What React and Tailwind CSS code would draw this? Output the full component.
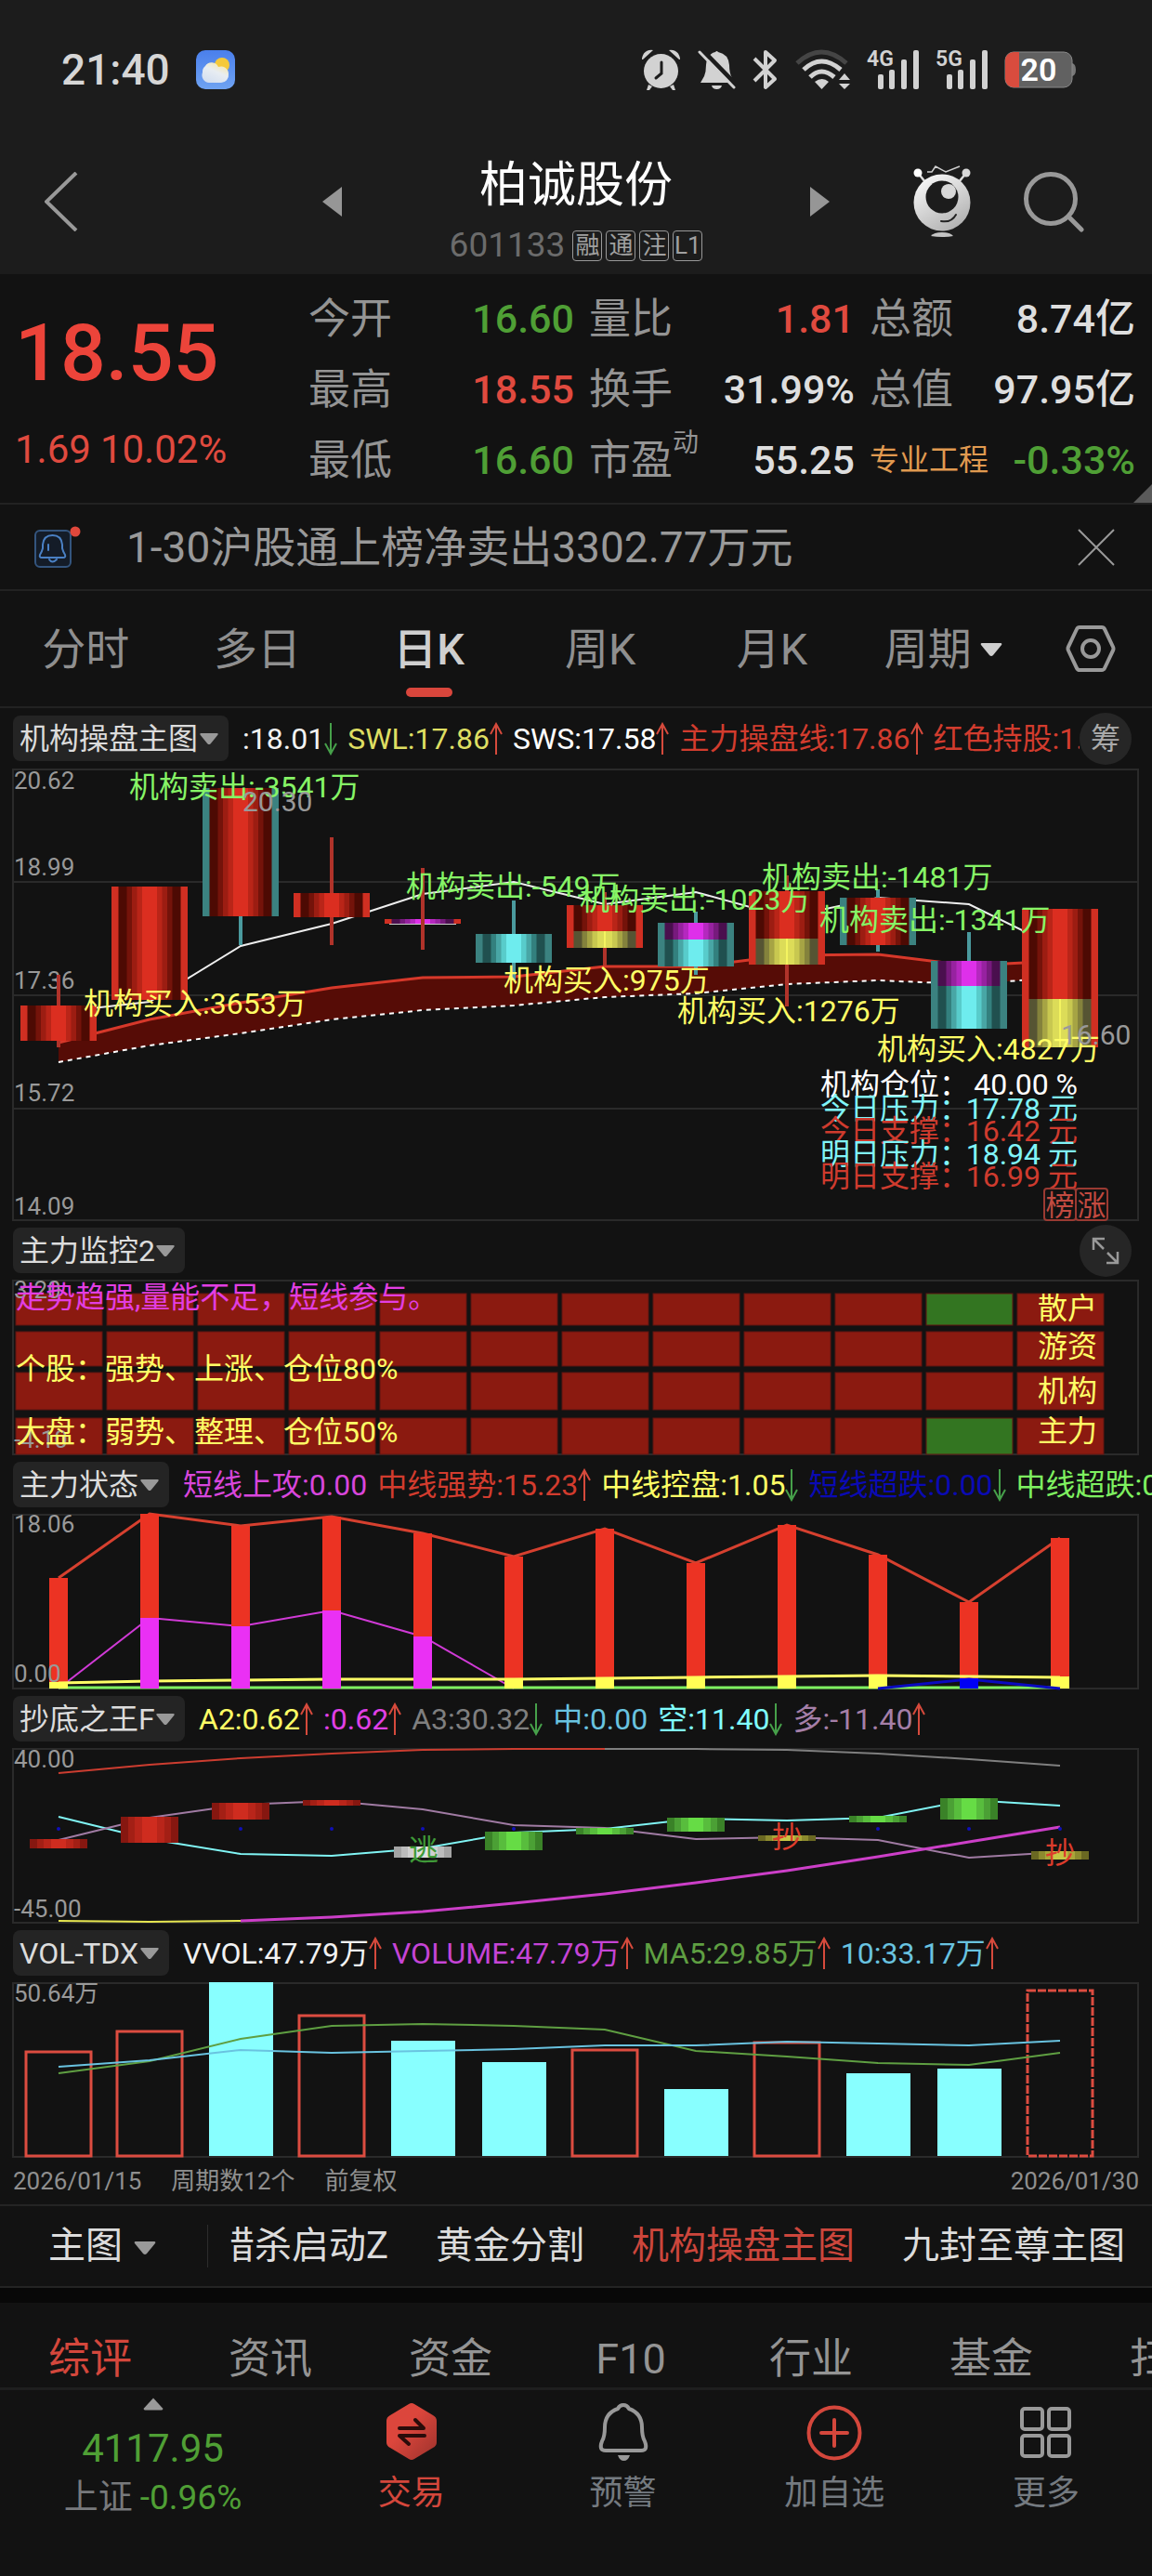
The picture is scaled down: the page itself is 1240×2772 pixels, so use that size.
import { clsx } from "clsx";

const quoteColumns = [
  [
    { label: "今开", value: "16.60", tone: "text-[#4f9f35]" },
    { label: "最高", value: "18.55", tone: "text-[#e04a3f]" },
    { label: "最低", value: "16.60", tone: "text-[#4f9f35]" },
  ],
  [
    { label: "量比", value: "1.81", tone: "text-[#e04a3f]" },
    { label: "换手", value: "31.99%", tone: "text-[#dedede]" },
    { label: "市盈", sup: "动", value: "55.25", tone: "text-[#dedede]" },
  ],
  [
    { label: "总额", value: "8.74亿", tone: "text-[#dedede]" },
    { label: "总值", value: "97.95亿", tone: "text-[#dedede]" },
    { label: "专业工程", sector: true, value: "-0.33%", tone: "text-[#4f9f35]" },
  ],
];

const periodTabs = ["分时", "多日", "日K", "周K", "月K"];
const infoTabs = ["综评", "资讯", "资金", "F10", "行业", "基金", "扫雷"];
const mainIndicators = ["猎杀启动Z", "黄金分割", "机构操盘主图", "九封至尊主图"];

const mainValues = [
  { text: ":18.01", tone: "text-[#f2f2f2]", dir: "down" },
  { text: "SWL:17.86", tone: "text-[#dede62]", dir: "up" },
  { text: "SWS:17.58", tone: "text-white", dir: "up" },
  { text: "主力操盘线:17.86", tone: "text-[#d23c2e]", dir: "up" },
  { text: "红色持股:1.00", tone: "text-[#d23c2e]" },
];

const stateValues = [
  { text: "短线上攻:0.00", tone: "text-[#d846dc]" },
  { text: "中线强势:15.23", tone: "text-[#d23c2e]", dir: "up" },
  { text: "中线控盘:1.05", tone: "text-[#ffff66]", dir: "down" },
  { text: "短线超跌:0.00", tone: "text-[#0a0ab4]", dir: "down" },
  { text: "中线超跌:0.00", tone: "text-[#7ef060]" },
];

const bottomValues = [
  { text: "A2:0.62", tone: "text-[#ffff66]", dir: "up" },
  { text: ":0.62", tone: "text-[#e040e6]", dir: "up" },
  { text: "A3:30.32", tone: "text-[#7f7f7f]", dir: "down" },
  { text: "中:0.00", tone: "text-[#69c3e0]" },
  { text: "空:11.40", tone: "text-[#80ffff]", dir: "down" },
  { text: "多:-11.40", tone: "text-[#a57fa8]", dir: "up" },
];

const volumeValues = [
  { text: "VVOL:47.79万", tone: "text-[#f2f2f2]", dir: "up" },
  { text: "VOLUME:47.79万", tone: "text-[#c544d6]", dir: "up" },
  { text: "MA5:29.85万", tone: "text-[#5f9f42]", dir: "up" },
  { text: "10:33.17万", tone: "text-[#69c3e0]", dir: "up" },
];

// column centre and polyline helpers shared by all the charts
const cx = (i) => 50 + 98 * i;
const line = (ys, from = 0) => ys.map((y, i) => `${cx(i + from)},${y}`).join(" ");

const shades = {
  red: ["#4d0a03", "#74130a", "#9c1d12", "#b92518", "#db2e20"],
  cyan: ["#20504f", "#33807e", "#48a6a5", "#58cccb", "#6eecee"],
  yellow: ["#565433", "#84823c", "#a6a444", "#c8c850", "#dcdc58"],
  magenta: ["#4a0f4e", "#771a7d", "#9722a0", "#b528bf", "#de30ea"],
};
const shadeWidths = [67, 49, 38, 27, 16];

const candles = [
  { shell: "red", top: 255, bottom: 293, high: 222, low: 300, body: "red" },
  { shell: "red", top: 127, bottom: 249, high: 127, low: 249, body: "red" },
  { shell: "teal", top: 21, bottom: 159, high: 21, low: 190, body: "red" },
  { shell: "red", top: 134, bottom: 160, high: 74, low: 190, body: "red" },
  { shell: "red", top: 162, bottom: 167, high: 107, low: 195, body: "magenta", front: true },
  { shell: "teal", top: 178, bottom: 209, high: 142, low: 228, body: "cyan" },
  { shell: "red", top: 147, bottom: 193, high: 133, low: 212, body: "red", split: 175, lower: "yellow" },
  { shell: "teal", top: 166, bottom: 213, high: 154, low: 222, body: "magenta", split: 184, lower: "cyan" },
  { shell: "red", top: 132, bottom: 211, high: 115, low: 256, body: "red", split: 183, lower: "yellow" },
  { shell: "teal", top: 139, bottom: 190, high: 130, low: 197, body: "red" },
  { shell: "teal", top: 207, bottom: 280, high: 176, low: 280, body: "magenta", split: 234, lower: "cyan" },
  { shell: "red", top: 151, bottom: 300, high: 151, low: 300, body: "red", split: 248, lower: "yellow" },
];

const whiteLine = [262, 251, 191, 167, 135, 122, 146, 133, 160, 139, 146, 194];
const redLine = [295, 270, 252, 236, 225, 224, 213, 213, 201, 200, 212, 207];
const dashLine = [316, 298, 285, 270, 260, 255, 246, 242, 232, 228, 232, 225];

const tradeLabels = [
  { x: 126, y: 31, text: "机构卖出:-3541万", fill: "#86f566" },
  { x: 77, y: 264, text: "机构买入:3653万", fill: "#ffff66" },
  { x: 424, y: 138, text: "机构卖出:-549万", fill: "#86f566" },
  { x: 529, y: 239, text: "机构买入:975万", fill: "#ffff66" },
  { x: 611, y: 152, text: "机构卖出:-1023万", fill: "#86f566" },
  { x: 807, y: 128, text: "机构卖出:-1481万", fill: "#86f566" },
  { x: 869, y: 174, text: "机构卖出:-1341万", fill: "#86f566" },
  { x: 716, y: 272, text: "机构买入:1276万", fill: "#ffff66" },
  { x: 931, y: 313, text: "机构买入:4827万", fill: "#ffff66" },
];

const levels = [
  { y: 351, label: "机构仓位：", value: "40.00 %", fill: "#ffffff" },
  { y: 377, label: "今日压力：", value: "17.78 元", fill: "#80f4f8" },
  { y: 401, label: "今日支撑：", value: "16.42 元", fill: "#cf3b2e" },
  { y: 426, label: "明日压力：", value: "18.94 元", fill: "#80f4f8" },
  { y: 450, label: "明日支撑：", value: "16.99 元", fill: "#cf3b2e" },
];

const Triangle = ({ className = "", up = false }) => (
  <svg viewBox="0 0 24 14" className={clsx("shrink-0 fill-current", className)} aria-hidden="true">
    <path d={up ? "M12 0 23 12Q24 14 22 14H2Q0 14 1 12Z" : "M2 0H22Q24 0 23 2L14 13Q12 15 10 13L1 2Q0 0 2 0Z"} />
  </svg>
);

const Arrow = ({ dir }) => (
  <svg viewBox="0 0 14 36" className={clsx("h-9 w-3.5 shrink-0", dir === "up" ? "text-[#d64a3c]" : "text-[#46a04a]")} fill="none" stroke="currentColor" strokeWidth="2" aria-hidden="true">
    {dir === "up" ? <path d="M7 35V2M1 13 7 2l6 11" /> : <path d="M7 1v33M1 23l6 11 6-11" />}
  </svg>
);

const StatusBar = () => (
  <div className="flex h-[150px] items-center justify-between pr-[82px] pl-[66px]">
    <div className="flex items-center gap-7">
      <span className="text-[46px] leading-none font-medium text-[#d6d6d6]">21:40</span>
      <svg viewBox="0 0 42 42" className="size-[42px]" aria-hidden="true">
        <defs>
          <linearGradient id="sky" x1="0" y1="0" x2="0" y2="1">
            <stop offset="0" stopColor="#4a7fec" />
            <stop offset="1" stopColor="#6fa3f2" />
          </linearGradient>
          <linearGradient id="cloud" x1="0.8" y1="0" x2="0.2" y2="1">
            <stop offset="0" stopColor="#f7e7a4" />
            <stop offset="0.45" stopColor="#e8edf2" />
            <stop offset="1" stopColor="#d2def0" />
          </linearGradient>
        </defs>
        <rect width="42" height="42" rx="10" fill="url(#sky)" />
        <circle cx="28" cy="16" r="8" fill="#f5c93a" />
        <path d="M14 35a8 8 0 0 1-7-11 8 8 0 0 1 3-7 8 8 0 0 1 14 1 8 8 0 0 1 11 8 8 8 0 0 1-8 9z" fill="url(#cloud)" />
      </svg>
    </div>
    <div className="flex items-center gap-[18px] text-[#d2d2d2]">
      <svg viewBox="0 0 43 44" className="h-11 w-[43px]" fill="currentColor" aria-label="闹钟">
        <circle cx="21.500" cy="23.500" r="18.500" />
        <path d="M1 11a10 10 0 0 1 12-10L2 11zM42 11A10 10 0 0 0 30 1l11 10zM8 38l4 2-3 4H6zM35 38l-4 2 3 4h3z" />
        <path d="M22 14v12l-6 5" fill="none" stroke="#1c1c1c" strokeWidth="3" strokeLinecap="round" />
      </svg>
      <svg viewBox="0 0 41 44" className="h-11 w-[41px]" aria-label="静音">
        <path d="M19 3q1.500-2 3 0 11 2 12 14 0 9 3 14l2 5H3l4-7q2-5 2-12 1-12 10-14zM15 39h11q-1 4-5.500 4T15 39z" fill="currentColor" />
        <path d="M4 0 43 40" stroke="#1c1c1c" strokeWidth="5" />
        <path d="M2 3 39 41" stroke="currentColor" strokeWidth="3" strokeLinecap="round" />
      </svg>
      <svg viewBox="0 0 28 44" className="h-11 w-7" fill="none" stroke="currentColor" strokeWidth="4" strokeLinejoin="round" aria-label="蓝牙">
        <path d="M2 10 24 32 14 41V3l10 9L2 34" />
      </svg>
      <svg viewBox="0 0 59 44" className="h-11 w-[59px]" fill="none" stroke="currentColor" strokeWidth="5" aria-label="无线网络">
        <path d="M2 15Q28-9 55 15" stroke="#454545" />
        <path d="M9 22q19-18 40 0M16 30q12-12 26 0" />
        <path d="m21 35q8-6 15 0l-7.500 8zM53 26l6 7H47zM47 37h12l-6 6z" fill="currentColor" stroke="none" />
      </svg>
      {["4G", "5G"].map((net) => (
        <svg key={net} viewBox="0 0 56 44" className="h-11 w-14" fill="currentColor" aria-label={net}>
          <text x="0" y="18" className="text-[23px] font-semibold">{net}</text>
          <rect x="12" y="27" width="6" height="16" rx="2" />
          <rect x="24" y="22" width="6" height="21" rx="2" />
          <rect x="37" y="11" width="6" height="32" rx="2" />
          <rect x="50" y="1" width="6" height="42" rx="2" />
        </svg>
      ))}
      <svg viewBox="0 0 77 40" className="h-10 w-[77px]" aria-label="电量 20%">
        <path d="M73 13q4 1 4 7t-4 7z" fill="#777" />
        <rect x="1" y="1" width="72" height="38" rx="9" fill="#616161" stroke="#8a8a8a" strokeWidth="1" />
        <path d="M16 1H10a9 9 0 0 0-9 9v20a9 9 0 0 0 9 9h6z" fill="#d94c3e" />
        <text x="37" y="32" textAnchor="middle" className="fill-white text-[34px] font-semibold">20</text>
      </svg>
    </div>
  </div>
);

const TitleBar = () => (
  <div className="grid h-[145px] grid-cols-[1fr_auto_1fr] items-center pb-3">
    <button type="button" className="w-fit pl-12 text-[#999]" aria-label="返回">
      <svg viewBox="0 0 36 64" className="h-16 w-9" fill="none" stroke="currentColor" strokeWidth="4">
        <path d="M34 1 2 32l32 31" />
      </svg>
    </button>
    <div className="flex items-center">
      <button type="button" className="text-[#969696]" aria-label="上一只">
        <svg viewBox="0 0 21 32" className="h-8 w-[21px] fill-current"><path d="M21 0v32L0 16z" /></svg>
      </button>
      <div className="flex w-[504px] flex-col items-center gap-3.5 pt-5">
        <h1 className="text-[52px] leading-[60px] text-white">柏诚股份</h1>
        <div className="flex items-center gap-1">
          <span className="mr-1 text-[37px] leading-10 text-[#6b6b6b]">601133</span>
          {["融", "通", "注", "L1"].map((tag) => (
            <span key={tag} className="grid h-[33px] w-8 place-items-center rounded-sm border border-[#999] text-[26px] leading-none text-[#a0a0a0]">{tag}</span>
          ))}
        </div>
      </div>
      <button type="button" className="text-[#969696]" aria-label="下一只">
        <svg viewBox="0 0 21 32" className="h-8 w-[21px] fill-current"><path d="M0 0v32l21-16z" /></svg>
      </button>
    </div>
    <div className="flex items-center justify-end gap-14 pr-[73px]">
      <button type="button" aria-label="智能助手">
        <svg viewBox="0 0 62 78" className="h-[78px] w-[62px]">
          <defs>
            <linearGradient id="robot" x1="0" y1="0" x2="0.6" y2="1">
              <stop offset="0" stopColor="#ffffff" />
              <stop offset="1" stopColor="#b4b4b4" />
            </linearGradient>
          </defs>
          <path d="M15 7h5l4-6 11 6 15-6" fill="none" stroke="#cfcfcf" strokeWidth="1.500" />
          <path d="M5 8l8 10M57 8l-8 10" stroke="#ddd" strokeWidth="2.500" />
          <circle cx="5" cy="8" r="4.500" fill="#fff" />
          <circle cx="57" cy="8" r="4.500" fill="#d8d8d8" />
          <circle cx="31" cy="40" r="30.500" fill="url(#robot)" />
          <circle cx="31" cy="34" r="17.500" fill="#1c1c1c" />
          <circle cx="38" cy="28" r="8" fill="#d8d8d8" />
          <path d="M30 60q11 2 16-7" fill="none" stroke="#222" strokeWidth="2" strokeLinecap="round" />
          <path d="M19 76q3-4 12-4t12 4q-12 2-24 0z" fill="#c4c4c4" />
        </svg>
      </button>
      <button type="button" aria-label="搜索">
        <svg viewBox="0 0 66 66" className="size-[66px]" fill="none" stroke="#999" strokeWidth="5" strokeLinecap="round">
          <circle cx="30" cy="30" r="26.500" />
          <path d="m49 49 14 14" />
        </svg>
      </button>
    </div>
  </div>
);

const Quote = () => (
  <section className="relative flex border-b-2 border-[#222] pt-2.5 pb-2">
    <div className="flex w-[332px] flex-col pl-4">
      <div className="flex h-[150px] items-center text-[86px] leading-none font-medium text-[#ec443a]">18.55</div>
      <div className="flex h-[58px] items-center gap-2.5 text-[42px] leading-none text-[#e04a3f]">
        <span>1.69</span>
        <span>10.02%</span>
      </div>
    </div>
    <div className="grid flex-1 grid-cols-3 gap-x-4 pr-[18px]">
      {quoteColumns.map((rows) => (
        <dl key={rows[0].label}>
          {rows.map((row) => (
            <div key={row.label} className="flex h-[76px] items-center justify-between whitespace-nowrap">
              <dt className={row.sector ? "text-[32px] text-[#e09a50]" : "flex text-[45px] leading-none text-[#949494]"}>
                {row.label}
                {row.sup && <span className="-mt-2.5 text-[28px] leading-none">{row.sup}</span>}
              </dt>
              <dd className={clsx("text-[43px] leading-none font-medium", row.tone)}>{row.value}</dd>
            </div>
          ))}
        </dl>
      ))}
    </div>
    <svg viewBox="0 0 20 20" className="absolute right-0 bottom-0 size-5" aria-hidden="true"><path d="M20 0v20H0z" fill="#5a5a5a" /></svg>
  </section>
);

const Notice = () => (
  <section className="flex h-[93px] items-center border-b-2 border-[#222] pr-10 pl-9">
    <svg viewBox="0 0 52 46" className="h-[46px] w-[52px]" fill="none" aria-hidden="true">
      <rect x="2" y="5" width="38" height="39" rx="5" stroke="#34557e" strokeWidth="2" fill="#141c28" />
      <path d="M9 34q-3 0-2-3 2-3 3-7v-4q1-10 10.500-10T31 20v4q1 4 3 7 1 3-2 3zM17 36q3 5 8 0M16 20v6" stroke="#4a80c4" strokeWidth="2" strokeLinecap="round" />
      <circle cx="45" cy="6" r="5.500" fill="#e0483c" />
    </svg>
    <p className="ml-12 flex-1 text-[46px] leading-none text-[#999]">1-30沪股通上榜净卖出3302.77万元</p>
    <button type="button" aria-label="关闭">
      <svg viewBox="0 0 40 40" className="size-10" stroke="#999" strokeWidth="2"><path d="M1 1 39 39M39 1 1 39" /></svg>
    </button>
  </section>
);

const PeriodTabs = () => (
  <nav className="flex h-[126px] border-b-2 border-[#222] text-[47px] text-[#8f8f8f]">
    {periodTabs.map((tab) => (
      <button key={tab} type="button" className={clsx("relative flex-1 pt-0.5", tab === "日K" && "font-medium text-[#cfcfcf]")}>
        {tab}
        {tab === "日K" && <span className="absolute bottom-2.5 left-1/2 h-2.5 w-[50px] -translate-x-1/2 rounded-full bg-[#d9463c]" />}
      </button>
    ))}
    <label className="flex flex-1 items-center justify-center gap-2 pt-0.5">
      <select aria-label="周期" className="appearance-none bg-transparent outline-none">
        <option>周期</option>
      </select>
      <Triangle className="h-3.5 w-[26px] text-[#cfcfcf]" />
    </label>
    <button type="button" className="grid w-[132px] place-items-center" aria-label="设置">
      <svg viewBox="0 0 54 50" className="h-[50px] w-[54px]" fill="none" stroke="#999" strokeWidth="4">
        <path d="M15 2h24q2 0 3 2l9 19q1 2 0 4l-9 19q-1 2-3 2H15q-2 0-3-2L3 27q-1-2 0-4l9-19q1-2 3-2z" />
        <circle cx="27" cy="25" r="9" />
      </svg>
    </button>
  </nav>
);

const PanelHeader = ({ name, values = [], action, tall = false }) => (
  <div className={clsx("flex items-center pl-3.5", tall ? "h-[65px]" : "h-[63px]")}>
    <label className="flex h-[49px] shrink-0 items-center rounded-lg bg-[#242424] pr-2.5 pl-[7px] text-[32px] text-[#dcdcdc]">
      <select aria-label={name} className="appearance-none bg-transparent outline-none">
        <option>{name}</option>
      </select>
      <Triangle className="h-3 w-[22px] text-[#999]" />
    </label>
    <div className="ml-[15px] flex min-w-0 flex-1 gap-[11px] overflow-hidden text-[32px] leading-9 whitespace-nowrap">
      {values.map((item) => (
        <span key={item.text} className={clsx("flex shrink-0 items-center", item.tone)}>
          {item.text}
          {item.dir && <Arrow dir={item.dir} />}
        </span>
      ))}
    </div>
    {action}
  </div>
);

const Chart = ({ height, label, children }) => (
  <div className="px-[13px]">
    <svg viewBox={`0 0 1214 ${height}`} className="block h-auto w-full overflow-visible" role="img" aria-label={label}>
      <rect x="1" y="1" width="1211" height={height - 2} fill="none" stroke="#2a2a2a" strokeWidth="2" />
      {children}
    </svg>
  </div>
);

const AxisText = ({ y, children }) => (
  <text x="2" y={y} className="fill-[#999] text-[26px]">{children}</text>
);

const ShadedBar = ({ x, top, bottom, colors, widths }) =>
  widths.map((w, i) => <rect key={w} x={x - w / 2} y={top} width={w} height={bottom - top} fill={colors[i]} />);

const Candle = ({ x, shell, top, bottom, high, low, body, split, lower, front }) => {
  const wick = <rect x={x - 2} y={high} width="4" height={low - high} fill={shell === "red" ? "#b0332a" : "#4a9a9e"} />;
  return (
    <g>
      {!front && wick}
      <rect x={x - 41} y={top} width="82" height={bottom - top} fill={shell === "red" ? "#d02f22" : "#3b8280"} />
      <ShadedBar x={x} top={top} bottom={split || bottom} colors={shades[body]} widths={shadeWidths} />
      {lower && <ShadedBar x={x} top={split} bottom={bottom} colors={shades[lower]} widths={shadeWidths} />}
      {lower === "yellow" && <rect x={x - 1} y={split} width="2" height={bottom - split} fill="#f4f460" />}
      {front && <rect x={x - 36} y={bottom} width="72" height="1" fill="#ccc" />}
      {front && wick}
    </g>
  );
};

const MainChart = () => (
  <Chart height={487} label="日K 主图">
    <path d="M1 122H1212M1 244H1212M1 366H1212" stroke="#2a2a2a" strokeWidth="2" />
    {["20.62", "18.99", "17.36", "15.72", "14.09"].map((text, i) => (
      <AxisText key={text} y={[22, 115, 237, 358, 480][i]}>{text}</AxisText>
    ))}
    <polygon points={`${line(redLine)} ${line(dashLine).split(" ").reverse().join(" ")}`} fill="#560c06" />
    <polyline points={line(redLine)} fill="none" stroke="#d6382a" strokeWidth="3" />
    <polyline points={line(dashLine)} fill="none" stroke="#fff" strokeWidth="2" strokeDasharray="5 5" />
    <polyline points={line(whiteLine)} fill="none" stroke="#eee" strokeWidth="2" />
    {candles.map((candle, i) => <Candle key={cx(i)} x={cx(i)} {...candle} />)}
    {tradeLabels.map((item) => (
      <text key={item.text} x={item.x} y={item.y} fill={item.fill} className="text-[32px]">{item.text}</text>
    ))}
    <text x="248" y="46" className="fill-[#999] text-[30px]">20.30</text>
    <text x="1129" y="297" className="fill-[#999] text-[30px]">16.60</text>
    {levels.map((item) => (
      <g key={item.label} fill={item.fill} className="text-[32px]">
        <text x="870" y={item.y}>{item.label}</text>
        <text x="1147" y={item.y} textAnchor="end">{item.value}</text>
      </g>
    ))}
    {["榜", "涨"].map((text, i) => (
      <g key={text}>
        <rect x={1111 + i * 34} y="452" width="34" height="34" rx="3" fill="none" stroke="#9a3a32" strokeWidth="2" />
        <text x={1128 + i * 34} y="481" textAnchor="middle" className="fill-[#c24a40] text-[31px]">{text}</text>
      </g>
    ))}
  </Chart>
);

const monitorRows = [
  { y: 15, h: 34, label: "散户", base: 42, green: true },
  { y: 56, h: 37, label: "游资", base: 83 },
  { y: 100, h: 40, label: "机构", base: 131 },
  { y: 149, h: 39, label: "主力", base: 174, green: true },
];

const MonitorChart = () => (
  <Chart height={189} label="主力监控2">
    {monitorRows.map((row) =>
      candles.map((_, i) => (
        <rect key={`${row.label}${cx(i)}`} x={cx(i) - 46} y={row.y} width="93" height={row.h} stroke="#5f1510" strokeWidth="1" fill={row.green && i === 10 ? "#337521" : "#8b1a10"} />
      ))
    )}
    <AxisText y={20}>3.20</AxisText>
    <AxisText y={181}>-4.10</AxisText>
    <g className="fill-[#ffff66] text-[32px]">
      <text x="4" y="30" className="fill-[#e23ee2]">走势趋强,量能不足，短线参与。</text>
      <text x="4" y="107">个股：强势、上涨、仓位80%</text>
      <text x="4" y="175">大盘：弱势、整理、仓位50%</text>
      {monitorRows.map((row) => <text key={row.label} x="1104" y={row.base}>{row.label}</text>)}
    </g>
  </Chart>
);

const strength = [69, 0, 13, 3, 21, 46, 16, 53, 12, 44, 95, 26];
const attack = [188, 112, 121, 104, 132, 188];
const control = [182, 180, 179, 178, 178, 178, 177, 176, 175, 174, 175, 176];

const StateChart = () => (
  <Chart height={189} label="主力状态">
    <polyline points={line(strength)} fill="none" stroke="#d6402f" strokeWidth="3" />
    <polyline points={line(attack)} fill="none" stroke="#d03ad6" strokeWidth="2" />
    {strength.map((y, i) => <rect key={cx(i)} x={cx(i) - 10} y={y} width="20" height={188 - y} fill="#ec3323" />)}
    <path d="M50 187H1128" stroke="#7ef060" strokeWidth="3" />
    <polyline points={line(control)} fill="none" stroke="#ffff66" strokeWidth="3" />
    {[1, 2, 3, 4].map((i) => <rect key={i} x={cx(i) - 10} y={attack[i]} width="20" height={188 - attack[i]} fill="#ea30f4" />)}
    {[0, 5, 6, 7, 8, 9, 11].map((i) => <rect key={i} x={cx(i) - 10} y={control[i] - 1} width="20" height={189 - control[i]} fill="#ffff55" />)}
    <polyline points={line([188, 178, 188], 9)} fill="none" stroke="#0a0ac0" strokeWidth="3" />
    <rect x={cx(10) - 10} y="177" width="20" height="11" fill="#0000f4" />
    <AxisText y={20}>18.06</AxisText>
    <AxisText y={181}>0.00</AxisText>
  </Chart>
);

const barShades = {
  red: ["#861710", "#a31f15", "#b9251a", "#cf2c1f"],
  green: ["#3a8228", "#4ba035", "#58bd3d", "#66dc45"],
  gray: ["#a4a4a4", "#bcbcbc", "#d0d0d0", "#e0e0e0"],
  olive: ["#6a6822", "#8c8a2e", "#a8a638", "#c6c644"],
};

const trendBars = [
  [98, 108, "red"], [74, 102, "red"], [59, 77, "red"], [56, 62, "red"],
  [106, 118, "gray"], [90, 110, "green"], [86, 93, "green"], [75, 90, "green"],
  [94, 100, "olive"], [73, 80, "green"], [54, 77, "green"], [111, 120, "olive"],
];

const BottomChart = () => (
  <Chart height={189} label="抄底之王F">
    <g fill="none" strokeWidth="2">
      <polyline points={line([27, 18, 11, 6, 2, 1, 1])} stroke="#cc3d30" />
      <polyline points={line([1, 1, 2, 6, 12, 19], 6)} stroke="#7f7f7f" />
      <polyline points={line([74, 98, 114, 116, 108, 91, 87, 76, 78, 75, 56, 62])} stroke="#80f4f4" />
      <polyline points={line([99, 75, 61, 57, 66, 83, 86, 98, 96, 99, 118, 112])} stroke="#a07ba3" />
      <polyline points={line([186, 187, 186])} stroke="#e6e650" />
      <polyline points={line([186, 182, 176, 167, 157, 145, 132, 117, 101, 85], 2)} stroke="#cc3fc8" strokeWidth="3" />
    </g>
    {[0, 2, 3, 4, 5, 9, 10, 11].map((i) => <circle key={i} cx={cx(i)} cy="87" r="2" fill="#1010b8" />)}
    {trendBars.map(([top, bottom, tone], i) => (
      <ShadedBar key={cx(i)} x={cx(i)} top={top} bottom={bottom} colors={barShades[tone]} widths={[62, 46, 32, 16]} />
    ))}
    <text x="427" y="121" className="fill-[#3f9a38] text-[32px]">逃</text>
    <text x="818" y="107" className="fill-[#dc3c2c] text-[32px]">抄</text>
    <text x="1112" y="124" className="fill-[#dc3c2c] text-[32px]">抄</text>
    <AxisText y={21}>40.00</AxisText>
    <AxisText y={182}>-45.00</AxisText>
  </Chart>
);

const volumes = [
  { top: 75, up: true }, { top: 53, up: true }, { top: 0 }, { top: 36, up: true },
  { top: 63 }, { top: 86 }, { top: 73, up: true }, { top: 115 },
  { top: 65, up: true }, { top: 98 }, { top: 93 }, { top: 9, up: true, live: true },
];

const VolumeChart = () => (
  <Chart height={189} label="成交量">
    {volumes.map(({ top, up, live }, i) =>
      up ? (
        <rect key={cx(i)} x={cx(i) - 35} y={top} width="70" height={187 - top} fill="none" stroke="#dc4c40" strokeWidth="3" strokeDasharray={live ? "9 2" : undefined} />
      ) : (
        <rect key={cx(i)} x={cx(i) - 34} y={top} width="69" height={187 - top} fill="#88ffff" />
      )
    )}
    <polyline points={line([98, 85, 61, 47, 45, 47, 51, 74, 80, 87, 89, 76])} fill="none" stroke="#5f9f42" strokeWidth="2" />
    <polyline points={line([91, 84, 73, 76, 74, 72, 68, 68, 64, 66, 68, 63])} fill="none" stroke="#69c3e0" strokeWidth="2" />
    <AxisText y={21}>50.64万</AxisText>
  </Chart>
);

const IndicatorBar = () => (
  <nav className="flex h-[90px] items-center overflow-hidden border-y-2 border-[#242424] text-[40px] whitespace-nowrap text-[#dcdcdc]">
    <label className="flex w-[223px] shrink-0 items-center gap-3 pl-[52px]">
      <select aria-label="主图" className="appearance-none bg-transparent outline-none">
        <option>主图</option>
      </select>
      <Triangle className="mt-1 h-3.5 w-6 text-[#999]" />
    </label>
    <span className="mr-6 h-[46px] w-px shrink-0 bg-[#2c2c2c]" />
    <div className="flex-1 overflow-hidden">
      <div className="-ml-3.5 flex gap-[51px]">
        {mainIndicators.map((name) => (
          <button key={name} type="button" className={clsx("shrink-0", name === "机构操盘主图" && "text-[#cc463c]")}>{name}</button>
        ))}
      </div>
    </div>
  </nav>
);

const InfoTabs = () => (
  <nav className="flex h-[94px] items-end overflow-hidden border-b-3 border-[#1e1e1e] text-[45px] leading-[60px] text-[#949494]">
    {infoTabs.map((tab) => (
      <button key={tab} type="button" className={clsx("w-[194px] shrink-0", tab === "综评" && "text-[#d4473c]")}>{tab}</button>
    ))}
  </nav>
);

const navItems = [
  {
    label: "交易",
    active: true,
    icon: (
      <>
        <defs>
          <linearGradient id="trade" x1="0" y1="0" x2="1" y2="1">
            <stop offset="0.4" stopColor="#dc463c" />
            <stop offset="1" stopColor="#9c322c" />
          </linearGradient>
        </defs>
        <path d="M28 2q3-2 6 0l20 12q4 2 4 6v23q0 4-4 6L34 61q-3 2-6 0L8 49q-4-2-4-6V20q0-4 4-6z" fill="url(#trade)" />
        <path d="M18 28h26L35 19M45 36H18l10 9" fill="none" stroke="#2a0c0a" strokeWidth="4" strokeLinecap="round" strokeLinejoin="round" />
      </>
    ),
  },
  {
    label: "预警",
    icon: (
      <g fill="none" stroke="#999" strokeWidth="4">
        <path d="M31 3q4 0 6 4 14 5 14 20 0 10 3 15 4 10-4 10H12q-8 0-4-10 3-5 3-15Q11 12 25 7q2-4 6-4z" />
        <path d="M25 57h13q-2 6-6.500 6T25 57z" fill="#999" stroke="none" />
      </g>
    ),
  },
  {
    label: "加自选",
    icon: (
      <g fill="none" stroke="#d4473c" strokeWidth="4" strokeLinecap="round">
        <circle cx="31" cy="33" r="27.500" />
        <path d="M31 19v28M17 33h28" />
      </g>
    ),
  },
  {
    label: "更多",
    icon: (
      <g fill="none" stroke="#999" strokeWidth="4">
        <rect x="5" y="7" width="22" height="22" rx="3" />
        <rect x="34" y="7" width="22" height="22" rx="3" />
        <rect x="5" y="36" width="22" height="22" rx="3" />
        <rect x="34" y="36" width="22" height="22" rx="3" />
      </g>
    ),
  },
];

const BottomNav = () => (
  <nav className="flex pb-[61px] text-[36px] leading-10">
    <button type="button" className="flex w-[329px] flex-col items-center pt-2">
      <Triangle up className="h-3.5 w-[22px] text-[#999]" />
      <span className="mt-4 text-[42px] leading-[50px] text-[#4f9f35]">4117.95</span>
      <span className="mt-2 flex gap-2 text-[37px] text-[#77797c]">
        上证 <span className="text-[#4f9f35]">-0.96%</span>
      </span>
    </button>
    {navItems.map((item) => (
      <button key={item.label} type="button" className={clsx("flex flex-1 flex-col items-center gap-3.5 pt-[13px]", item.active ? "text-[#d4473c]" : "text-[#747a80]")}>
        <svg viewBox="0 0 62 64" className="h-16 w-[62px]" aria-hidden="true">{item.icon}</svg>
        {item.label}
      </button>
    ))}
  </nav>
);

const ExpandButton = () => (
  <button type="button" className="mr-[22px] grid size-14 shrink-0 place-items-center rounded-full bg-[#262626]" aria-label="放大">
    <svg viewBox="0 0 30 30" className="size-[30px]" fill="none" stroke="#999" strokeWidth="2.500">
      <path d="M2 14V2h12M2 2l11 11M28 16v12H16M28 28 17 17" />
    </svg>
  </button>
);

const App = () => (
  <main className="min-h-screen overflow-hidden bg-[#121212] font-[Roboto,'Noto_Sans_CJK_SC',sans-serif]">
    <header className="bg-[#1c1c1c]">
      <StatusBar />
      <TitleBar />
    </header>
    <Quote />
    <Notice />
    <PeriodTabs />
    <PanelHeader
      tall
      name="机构操盘主图"
      values={mainValues}
      action={<button type="button" className="mr-[22px] grid size-14 shrink-0 place-items-center rounded-full bg-[#262626] text-[32px] text-[#aaa]">筹</button>}
    />
    <MainChart />
    <PanelHeader name="主力监控2" action={<ExpandButton />} />
    <MonitorChart />
    <PanelHeader name="主力状态" values={stateValues} />
    <StateChart />
    <PanelHeader name="抄底之王F" values={bottomValues} />
    <BottomChart />
    <PanelHeader name="VOL-TDX" values={volumeValues} />
    <VolumeChart />
    <div className="flex h-[50px] items-center gap-8 px-3.5 text-[26px] text-[#8f8f8f]">
      <span>2026/01/15</span>
      <span>周期数12个</span>
      <span>前复权</span>
      <span className="ml-auto">2026/01/30</span>
    </div>
    <IndicatorBar />
    <div className="h-4 bg-[#080808]" />
    <InfoTabs />
    <BottomNav />
  </main>
);

export default App;
